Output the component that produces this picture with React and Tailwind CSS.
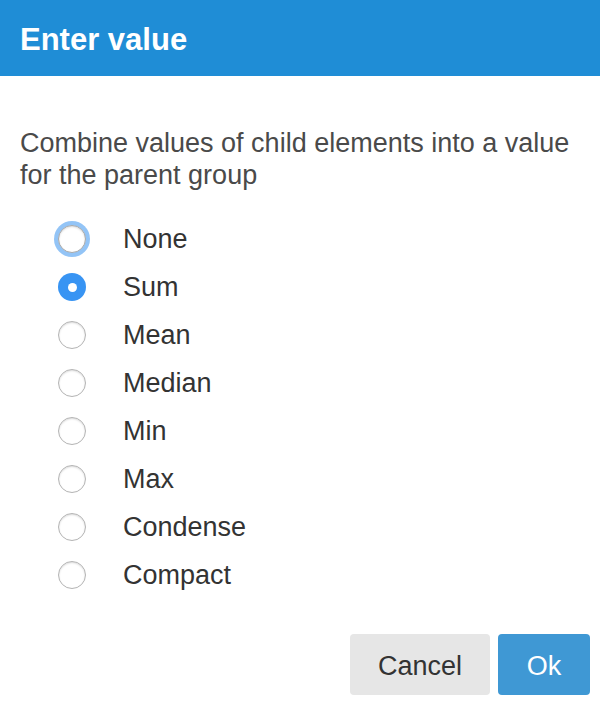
import React, { useState } from "react";

const OPTIONS = ["None", "Sum", "Mean", "Median", "Min", "Max", "Condense", "Compact"];

function Radio({ checked, focused }) {
    if (checked) {
        return (
            <span className="w-[28px] h-[28px] rounded-full bg-[#3894f3] flex items-center justify-center shrink-0">
                <span className="w-[9px] h-[9px] rounded-full bg-white"></span>
            </span>
        );
    }
    return (
        <span
            className={
                focused
                    ? "w-[28px] h-[28px] rounded-full bg-white border border-[#a9a9a9] shadow-[0_0_0_4px_#93c4f6,inset_0_1px_2px_rgba(0,0,0,0.15)] shrink-0"
                    : "w-[28px] h-[28px] rounded-full bg-white border border-[#b4b4b4] shadow-[inset_0_1px_2px_rgba(0,0,0,0.15)] shrink-0"
            }
        ></span>
    );
}

export default function App() {
    const [value, setValue] = useState("Sum");

    return (
        <div className="w-[600px] h-[706px] bg-white flex flex-col font-['Liberation_Sans',Arial,sans-serif]">
            {/* Dialog header */}
            <div className="h-[76px] bg-[#1f8dd6] flex items-center px-[20px] shrink-0">
                <h1 className="text-white text-[31px] font-bold leading-none pt-[2px]">Enter value</h1>
            </div>

            {/* Body */}
            <div className="px-[20px] pt-[51px]">
                <p className="text-[#4a4a4a] text-[27px] leading-[32px]">
                    Combine values of child elements into a value for the parent group
                </p>
            </div>

            <div className="flex flex-col pl-[58px] pt-[24px]">
                {OPTIONS.map((opt, i) => (
                    <label
                        key={opt}
                        className="h-[48px] flex items-center cursor-pointer"
                        onClick={() => setValue(opt)}
                    >
                        <Radio checked={value === opt} focused={i === 0} />
                        <span className="ml-[37px] text-[27px] text-[#333]">{opt}</span>
                    </label>
                ))}
            </div>

            {/* Footer buttons */}
            <div className="flex justify-end gap-[8px] pr-[10px] mt-auto mb-[11px]">
                <button className="w-[140px] h-[61px] pt-[3px] rounded-[4px] bg-[#e6e6e6] text-[#333] text-[27px]">
                    Cancel
                </button>
                <button className="w-[92px] h-[61px] pt-[3px] rounded-[4px] bg-[#3f98d4] text-white text-[27px]">
                    Ok
                </button>
            </div>
        </div>
    );
}
